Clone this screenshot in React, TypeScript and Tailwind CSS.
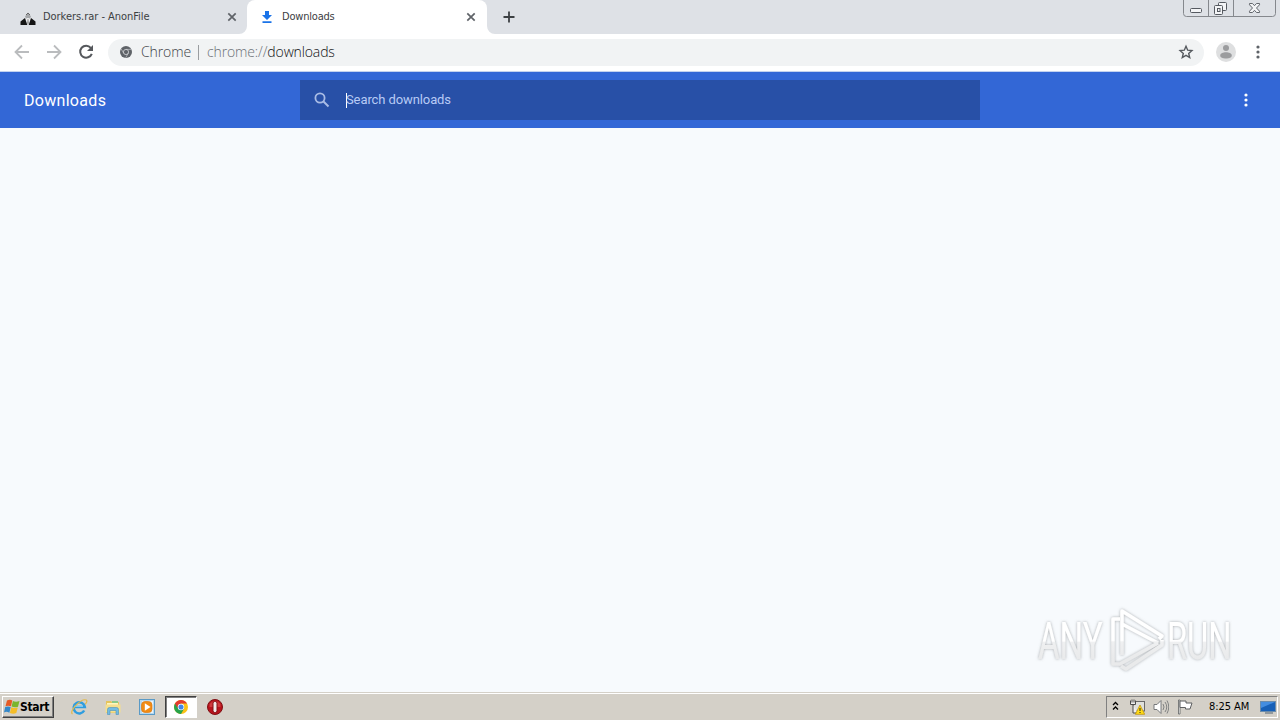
import type { ReactNode } from "react";

const CloseIcon = ({ className = "" }: { className?: string }) => (
  <svg className={`h-[10px] w-[10px] shrink-0 ${className}`} viewBox="0 0 10 10">
    <path d="M1.300 1.300l7.400 7.400M8.700 1.300L1.300 8.700" stroke="#5f6368" strokeWidth="1.7" />
  </svg>
);

const DotsIcon = ({ className = "" }: { className?: string }) => (
  <svg className={`h-4 w-4 shrink-0 ${className}`} viewBox="0 0 16 16" fill="currentColor">
    <circle cx="8" cy="3" r="1.6" />
    <circle cx="8" cy="8" r="1.6" />
    <circle cx="8" cy="13" r="1.6" />
  </svg>
);

function TabStrip() {
  return (
    <div className="flex h-[34px] bg-[#dee1e6] font-['DejaVu_Sans_Condensed','DejaVu_Sans',sans-serif] text-[11px] text-[#3c4043]">
      <div className="flex w-[247px] items-center pl-[20px]">
        <svg className="mt-1 h-4 w-4 shrink-0" viewBox="0 0 16 16">
          <path d="M5 5.500L8 1.500l3 4-1 2H6z" fill="#a5a7aa" />
          <path d="M6 4l2-2 2 2" fill="none" stroke="#666" />
          <path d="M.5 14V10.500L5 7l2.300 7zM15.500 14v-3.500L11 7l-2.300 7z" fill="#151515" />
          <path d="M6 8l2-1 2 1-2 6z" fill="#f5f5f5" />
          <path d="M7.600 8h.8l.4 4-.8 2-.8-2z" fill="#888" />
        </svg>
        <span className="ml-[7px] w-[184px] pt-px whitespace-nowrap tracking-[-0.04px]">Dorkers.rar - AnonFile</span>
        <CloseIcon />
      </div>
      <div className="relative flex w-[240px] items-center rounded-t-lg bg-white pl-[12px]">
        <svg className="absolute bottom-0 -left-2 h-2 w-2" viewBox="0 0 8 8">
          <path d="M8 0v8H0a8 8 0 0 0 8-8z" fill="#fff" />
        </svg>
        <svg className="absolute -right-2 bottom-0 h-2 w-2" viewBox="0 0 8 8">
          <path d="M0 0v8h8a8 8 0 0 1-8-8z" fill="#fff" />
        </svg>
        <svg className="h-4 w-4 shrink-0" viewBox="0 0 16 16" fill="#1a73e8">
          <path d="M6 2h4v4h3L8 11 3 6h3zM3.500 12.200h9V14h-9z" />
        </svg>
        <span className="ml-[7px] w-[184px] pt-px whitespace-nowrap tracking-[-0.2px]">Downloads</span>
        <CloseIcon />
      </div>
      <svg className="mt-[10px] ml-[15px] h-[14px] w-[14px]" viewBox="0 0 14 14">
        <path d="M7 1.500v11M1.500 7h11" stroke="#3c4043" strokeWidth="1.800" />
      </svg>
      <WindowButtons />
    </div>
  );
}

function WindowButtons() {
  return (
    <svg className="mr-[4px] ml-auto h-[18px] w-[93px]" viewBox="0 0 93 18" fill="none">
      <path d="M.5 0v13.500q0 3 3 3h86q3 0 3-3V0M25.500 0v16M50.500 0v16" stroke="#85888d" />
      <rect x="7.500" y="8.500" width="11" height="4" rx="1" stroke="#555960" fill="#f3f4f6" />
      <rect x="35.500" y="2.500" width="8" height="8" rx="1" stroke="#555960" fill="#f3f4f6" />
      <rect x="31.500" y="5.500" width="8" height="9" rx="1" stroke="#555960" fill="#f3f4f6" />
      <rect x="34.500" y="8.500" width="2.500" height="3" stroke="#555960" />
      <path d="M66.500 3.500h3l2 2.200 2-2.200h3v1.300l-3 3.200 3 3.200v1.300h-3l-2-2.200-2 2.200h-3v-1.300l3-3.200-3-3.200z" stroke="#62666c" fill="#f3f4f6" />
    </svg>
  );
}

function Toolbar() {
  return (
    <div className="flex h-[38px] items-center border-b border-[#c3d2ef] bg-white pb-px pl-[14px]">
      <svg className="h-4 w-4" viewBox="0 0 16 16" fill="none" stroke="#babcbe" strokeWidth="1.800">
        <path d="M15 8H2M8 1.500L1.500 8 8 14.500" />
      </svg>
      <svg className="ml-4 h-4 w-4" viewBox="0 0 16 16" fill="none" stroke="#babcbe" strokeWidth="1.800">
        <path d="M1 8h13M8 1.500L14.500 8 8 14.500" />
      </svg>
      <svg className="ml-4 h-4 w-4" viewBox="0 0 16 16">
        <path d="M12.800 3.800A6 6 0 1 0 13.800 9.800" fill="none" stroke="#55585c" strokeWidth="2" />
        <path d="M15 1v6H9z" fill="#55585c" />
      </svg>
      <div className="ml-[14px] flex h-[27px] w-[1096px] items-center rounded-full bg-[#f1f3f4] pl-[12px] font-['Open_Sans',sans-serif] text-[14px] font-light">
        <svg className="h-3 w-3 shrink-0" viewBox="0 0 12 12">
          <circle cx="6" cy="6" r="6" fill="#5f6368" />
          <circle cx="6" cy="6" r="2.600" fill="#5f6368" stroke="#d5d7da" strokeWidth=".8" />
          <path d="M6 3.400h5.200M3.750 7.300L1.200 3M8.250 7.300L5.700 11.700" stroke="#d5d7da" strokeWidth=".6" />
        </svg>
        <span className="ml-[9px] w-[50px] pb-[2px] whitespace-nowrap tracking-[-0.12px] text-[#3f4348]">Chrome</span>
        <span className="ml-[7px] h-[15px] w-px bg-[#9a9da0]" />
        <span className="ml-[8px] pb-[2px] whitespace-nowrap tracking-[-0.13px] text-[#6b7076]">
          chrome://<span className="text-[#101113]">downloads</span>
        </span>
        <svg className="mr-[10px] ml-auto h-4 w-4" viewBox="0 0 16 16" fill="none">
          <path d="M8 2.300l1.700 3.900 4.200.4-3.200 2.800 1 4.100L8 11.300l-3.700 2.200 1-4.100-3.200-2.800 4.200-.4z" stroke="#55595e" strokeWidth="1.400" />
        </svg>
      </div>
      <svg className="ml-[12px] h-5 w-5" viewBox="0 0 20 20">
        <circle cx="10" cy="10" r="10" fill="#dedfe0" />
        <circle cx="10" cy="6" r="3" fill="#9b9c9e" />
        <path d="M4.200 13.500c0-2.300 3-3.300 5.800-3.300s5.800 1 5.800 3.300-3 3-5.800 3-5.800-.7-5.800-3z" fill="#9b9c9e" />
      </svg>
      <DotsIcon className="ml-[14px] text-[#5f6368]" />
    </div>
  );
}

function DownloadsHeader() {
  return (
    <div className="flex h-14 items-center bg-[#3367d6] font-[Roboto,sans-serif] text-white">
      <h1 className="w-[300px] pt-[2px] pl-6 text-[16px] tracking-[0.3px]">Downloads</h1>
      <div className="flex h-10 w-[680px] items-center bg-[#2850a7] pl-[14px] text-[13px] text-[#b8cbf5]">
        <svg className="h-4 w-4" viewBox="0 0 16 16" fill="none" stroke="#a9bce5" strokeWidth="1.800">
          <circle cx="6" cy="6" r="4.600" />
          <path d="M9.500 9.500l5 5" strokeWidth="2" />
        </svg>
        <span className="ml-4 h-[15px] w-px bg-white" />
        <span className="-ml-px whitespace-nowrap tracking-[-0.1px]">Search downloads</span>
      </div>
      <DotsIcon className="mr-[26px] ml-auto" />
    </div>
  );
}

function Watermark() {
  return (
    <svg className="absolute right-[34px] bottom-[14px] h-[76px] w-[215px]" viewBox="0 0 215 76">
      <defs>
        <linearGradient id="fade" x1="0" y1="16" x2="0" y2="56" gradientUnits="userSpaceOnUse">
          <stop offset="0.56" stopColor="#fff" />
          <stop offset="0.6" stopColor="#eff0f1" />
          <stop offset="1" stopColor="#e9eaeb" />
        </linearGradient>
        <linearGradient id="textFade" x1="0" y1="-36" x2="0" y2="0" gradientUnits="userSpaceOnUse">
          <stop offset="0.5" stopColor="#fff" />
          <stop offset="0.54" stopColor="#eff0f1" />
          <stop offset="1" stopColor="#e9eaeb" />
        </linearGradient>
        <filter id="soft" x="-10%" y="-20%" width="120%" height="140%">
          <feDropShadow dx="0" dy="0" stdDeviation="1.6" floodColor="#7c7f82" floodOpacity="0.65" />
        </filter>
      </defs>
      <g filter="url(#soft)">
        <g fontFamily="Roboto, sans-serif" fontSize="51" fill="url(#textFade)">
          <text transform="translate(7 57) scale(.65 1)">ANY</text>
          <text transform="translate(136 57) scale(.64 1)">RUN</text>
        </g>
        <g fill="none" stroke="url(#fade)" strokeWidth="3.500" strokeLinejoin="round">
          <path d="M91 53V9l40 25-3 3M91 22l36 19" />
          <path d="M89 17h-7v45h7l38-21" />
          <path d="M90 64l5 3 36-24v-5" />
        </g>
      </g>
    </svg>
  );
}

const TaskButton = ({ active = false, children }: { active?: boolean; children: ReactNode }) => (
  <div
    className={
      active
        ? "flex h-[22px] w-8 items-center justify-center border border-t-[#404040] border-r-white border-b-white border-l-[#404040] bg-white shadow-[inset_1px_1px_0_#808080]"
        : "flex h-[22px] w-8 items-center justify-center"
    }
  >
    {children}
  </div>
);

// four coloured panes, waving slightly to the right
function WindowsFlag() {
  return (
    <svg className="h-4 w-4 shrink-0" viewBox="0 0 16 16">
      <path d="M3 1.500q3-1.500 5.300 0L7 7.300q-3-1.200-5.500 0z" fill="#e65b25" />
      <path d="M8.900 2q3 1.500 6.600 0L14 7.700q-3 1.200-6.400-.1z" fill="#7ab52d" />
      <path d="M1.200 8q2.800-1.200 5.500 0L5.400 13.700q-3-1.700-5.400-.3z" fill="#3488c9" />
      <path d="M7.300 8.300q3 1.300 6.500.1L12.300 14.100q-3 1.300-6.400 0z" fill="#f5bd27" />
    </svg>
  );
}

function Taskbar() {
  return (
    <div className="flex h-[28px] items-center border-t border-[#d4d0c8] bg-[#d4d0c8] pb-px pt-px font-['DejaVu_Sans_Condensed','DejaVu_Sans',sans-serif] text-[11px] text-black shadow-[inset_0_1px_0_#fff]">
      <button className="ml-[2px] flex h-[22px] w-[52px] items-center border border-t-white border-r-[#404040] border-b-[#404040] border-l-white pl-px shadow-[inset_-1px_-1px_0_#808080]">
        <WindowsFlag />
        <span className="text-[12px] font-bold tracking-[-0.3px]">Start</span>
      </button>
      <div className="ml-[9px] flex items-center gap-[2px]">
        <TaskButton>
          <svg className="h-[18px] w-[18px]" viewBox="0 0 18 18" fill="none">
            <path d="M14.200 12.500A5.600 5.600 0 1 1 14.800 9H4" stroke="#2f9ddf" strokeWidth="2.500" />
            <path d="M4 8.300h9" stroke="#8cd8fa" />
            <path d="M2.500 16C-1.500 13.500 11 0 16.300 2c1.200.8.300 2.700-1.100 4.300" stroke="#e2b94c" strokeWidth="1.200" />
          </svg>
        </TaskButton>
        <TaskButton>
          <svg className="h-[18px] w-[18px]" viewBox="0 0 18 18">
            <path d="M2 3h5l1 1h7v11H2z" fill="#e5c45c" />
            <path d="M3 5h11v4H3z" fill="#fff6be" />
            <path d="M8 3h6v2H8z" fill="#8bc98a" />
            <path d="M1.500 6.500h15v8h-15z" fill="#f5df8e" />
            <path d="M3.500 16.500v-5q0-2 2-2h7q2 0 2 2v5h-2.500v-4H6v4z" fill="#73bbe2" stroke="#4b92bc" strokeWidth=".6" />
          </svg>
        </TaskButton>
        <TaskButton>
          <svg className="h-4 w-4" viewBox="0 0 16 16">
            <rect x=".5" y=".5" width="15" height="15" fill="#b5d8f0" stroke="#5a9ac6" />
            <rect x="3" y="2" width="11" height="12" fill="#e9f4fc" />
            <rect x="2.500" y="2.500" width="10.500" height="11" rx="3.500" fill="#f28b13" stroke="#d97a16" strokeWidth=".7" />
            <path d="M5.800 4.300v7.400L11.500 8z" fill="#fff" />
          </svg>
        </TaskButton>
        <TaskButton active>
          <svg className="h-[14px] w-[14px]" viewBox="0 0 16 16">
            <circle cx="8" cy="8" r="8" fill="#fbc116" />
            <path d="M1.100 4A8 8 0 0 0 8 16l3.500-6L8 8V4z" fill="#27a34b" />
            <path d="M1.100 4A8 8 0 0 1 14.900 4H8L4.500 6.500 4 9z" fill="#e33b2e" />
            <circle cx="8" cy="8" r="3.700" fill="#fff" />
            <circle cx="8" cy="8" r="2.900" fill="#4285e8" />
          </svg>
        </TaskButton>
        <TaskButton>
          <svg className="h-4 w-4" viewBox="0 0 16 16">
            <circle cx="8" cy="8" r="7.500" fill="#b9131c" stroke="#7e1014" />
            <path d="M2.500 5q5.500-6 11 0v3h-11z" fill="#db5052" opacity=".65" />
            <rect x="6" y="2.500" width="4" height="11" rx="1.700" fill="#f3e9e8" stroke="#811015" />
          </svg>
        </TaskButton>
      </div>
      <div className="mr-[2px] ml-auto flex h-[22px] w-[172px] items-center border border-t-[#808080] border-r-white border-b-white border-l-[#808080] pl-[5px]">
        <svg className="mb-[2px] h-[10px] w-[7px]" viewBox="0 0 7 10" fill="none" stroke="#000" strokeWidth="1.300">
          <path d="M1 4l2.500-2.500L6 4M1 8.500L3.500 6 6 8.500" />
        </svg>
        <svg className="ml-[10px] h-4 w-4" viewBox="0 0 16 16">
          <rect x="4.500" y="2.500" width="11" height="9.500" fill="#e0e0dc" stroke="#696969" />
          <path d="M1.500 1.500v4h5v-4M3 .5v3M5 .5v3M4 5.500v8.500h5" fill="#eee" stroke="#4b4b4b" />
          <path d="M11 6l4.700 9.300H6.300z" fill="#ffdb16" stroke="#b98b00" strokeWidth=".7" />
          <path d="M11 9v3m0 1v1" stroke="#222" />
        </svg>
        <svg className="ml-[8px] h-4 w-4" viewBox="0 0 16 16" fill="none" stroke="#77797b">
          <path d="M1 5.500h3L8 1.500v13L4 10.500H1z" fill="#fff" />
          <path d="M10 5q2 3 0 6M12 3q3.500 5 0 10M14 1.500q3.500 6.500 0 13" strokeWidth=".9" />
        </svg>
        <svg className="ml-[8px] h-4 w-4" viewBox="0 0 16 16" fill="none" stroke="#5d5f61">
          <path d="M1.500 1v14h1.500V1z" fill="#fff" strokeWidth=".8" />
          <path d="M3 2h6v2h6l-2 6H8.500V8.500H3z" fill="#fff" />
        </svg>
        <span className="ml-[16px] w-[41px] pt-px whitespace-nowrap tracking-[-0.05px]">8:25 AM</span>
        <svg className="ml-[10px] h-4 w-4 shrink-0" viewBox="0 0 16 16">
          <rect x=".5" y="2.500" width="15" height="10" fill="#1760b7" stroke="#6b8cab" />
          <path d="M1 3h14L1 9z" fill="#438de0" />
          <path d="M5 14h8" stroke="#7c878f" strokeWidth="1.500" />
        </svg>
      </div>
    </div>
  );
}

export default function App() {
  return (
    <div className="flex h-[720px] w-[1280px] flex-col overflow-hidden bg-white">
      <TabStrip />
      <Toolbar />
      <DownloadsHeader />
      <main className="relative flex-1 bg-[#f7fafd]">
        <Watermark />
      </main>
      <Taskbar />
    </div>
  );
}
